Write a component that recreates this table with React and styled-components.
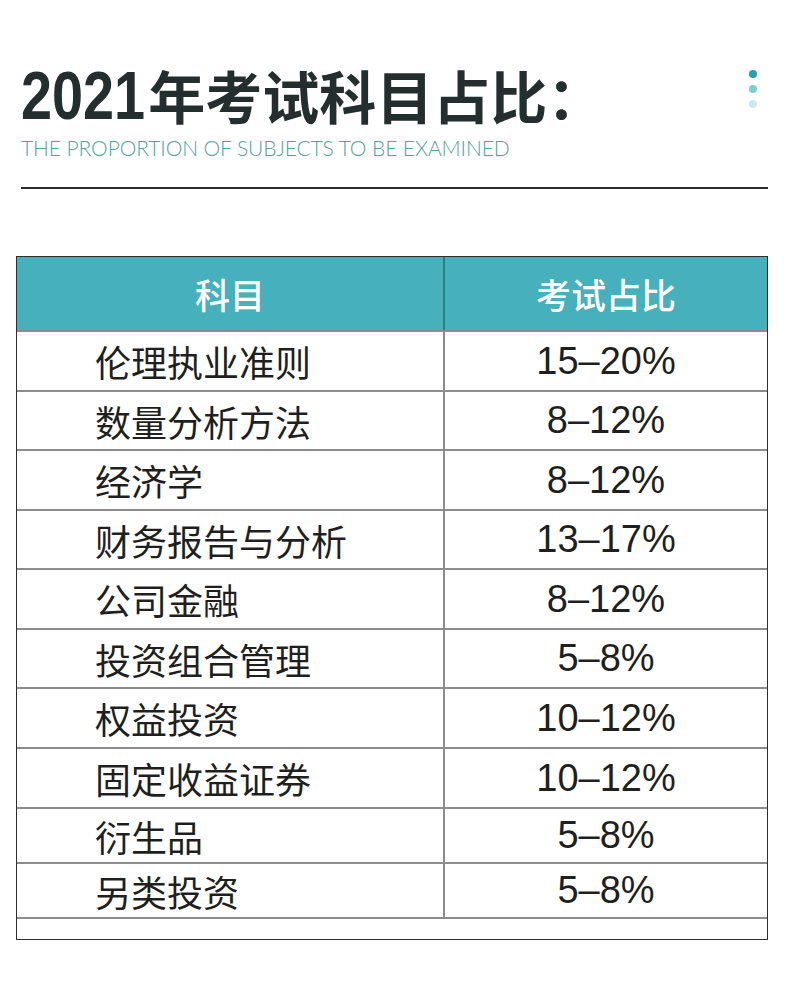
import React from "react";
import styled, { createGlobalStyle } from "styled-components";

const GlobalStyle = createGlobalStyle`
  html, body { margin: 0; padding: 0; background: #ffffff; }
  body { font-family: "Liberation Sans", "Noto Sans CJK SC", sans-serif; }
`;

const Page = styled.div`
  width: 790px;
  min-height: 1004px;
  background: #ffffff;
  box-sizing: border-box;
  padding-top: 55px;
`;

const Header = styled.header`
  display: flex;
  justify-content: space-between;
  align-items: flex-start;
  padding: 0 33px 0 21px;
`;

const TitleBlock = styled.div`
  display: flex;
  flex-direction: column;
`;

const Title = styled.h1`
  margin: 0;
  font-family: "Noto Sans CJK SC", sans-serif;
  font-weight: 700;
  font-size: 57px;
  line-height: 78px;
  color: #252e2e;
  white-space: nowrap;
`;

const Year = styled.span`
  display: inline-block;
  font-family: "Liberation Sans", sans-serif;
  font-weight: 700;
  font-size: 68px;
  line-height: 1;
  transform: scaleX(0.82);
  transform-origin: left center;
  margin-right: -24px;
`;

const Subtitle = styled.p`
  margin: 3px 0 0 0;
  font-family: "Lato", "Liberation Sans", sans-serif;
  font-weight: 300;
  font-size: 21px;
  line-height: 24px;
  letter-spacing: -0.1px;
  color: #56a0a5;
  white-space: nowrap;
`;

const Dots = styled.div`
  display: flex;
  flex-direction: column;
  gap: 7px;
  margin-top: 15px;
`;

const Dot = styled.span`
  width: 8px;
  height: 8px;
  border-radius: 50%;
  background: ${(p) => p.$color};
`;

const Rule = styled.hr`
  margin: 27px 22px 0 21px;
  border: 0;
  border-top: 2px solid #2b2b2b;
`;

const Table = styled.div`
  margin: 67px 22px 0 16px;
  border: 1px solid #2e2e2e;
  display: flex;
  flex-direction: column;
`;

const HeadRow = styled.div`
  display: grid;
  grid-template-columns: 426px 1fr;
  height: 73px;
  background: #46b0bc;
`;

const HeadCell = styled.div`
  display: flex;
  align-items: center;
  justify-content: center;
  font-family: "Noto Sans CJK SC", sans-serif;
  font-weight: 500;
  font-size: 35px;
  color: #ffffff;
  border-left: ${(p) => (p.$divider ? "2px solid #2f7d86" : "0")};
`;

const Row = styled.div`
  display: grid;
  grid-template-columns: 426px 1fr;
  box-sizing: border-box;
  height: ${(p) => p.$h}px;
  border-top: 2px solid #8c8c8c;
`;

const SubjectCell = styled.div`
  display: flex;
  align-items: center;
  padding-left: 78px;
  font-family: "Noto Sans CJK SC", sans-serif;
  font-weight: 400;
  font-size: 36px;
  color: #1f1f1f;
`;

const RatioCell = styled.div`
  display: flex;
  align-items: center;
  justify-content: center;
  border-left: 2px solid #8c8c8c;
  font-family: "Liberation Sans", sans-serif;
  font-size: 38px;
  color: #1f1f1f;
`;

const EmptyRow = styled.div`
  height: 22px;
  box-sizing: border-box;
  border-top: 2px solid #8c8c8c;
`;

const rows = [
  ["伦理执业准则", "15–20%", 60],
  ["数量分析方法", "8–12%", 59],
  ["经济学", "8–12%", 60],
  ["财务报告与分析", "13–17%", 59],
  ["公司金融", "8–12%", 60],
  ["投资组合管理", "5–8%", 59],
  ["权益投资", "10–12%", 60],
  ["固定收益证券", "10–12%", 60],
  ["衍生品", "5–8%", 55],
  ["另类投资", "5–8%", 55],
];

export default function App() {
  return (
    <Page>
      <GlobalStyle />
      <Header>
        <TitleBlock>
          <Title>
            <Year>2021</Year>年考试科目占比：
          </Title>
          <Subtitle>THE PROPORTION OF SUBJECTS TO BE EXAMINED</Subtitle>
        </TitleBlock>
        <Dots>
          <Dot $color="#1fa3ae" />
          <Dot $color="#80cdd3" />
          <Dot $color="#c9eaed" />
        </Dots>
      </Header>
      <Rule />
      <Table>
        <HeadRow>
          <HeadCell>科目</HeadCell>
          <HeadCell $divider>考试占比</HeadCell>
        </HeadRow>
        {rows.map(([name, ratio, h]) => (
          <Row key={name} $h={h}>
            <SubjectCell>{name}</SubjectCell>
            <RatioCell>{ratio}</RatioCell>
          </Row>
        ))}
        <EmptyRow />
      </Table>
    </Page>
  );
}
